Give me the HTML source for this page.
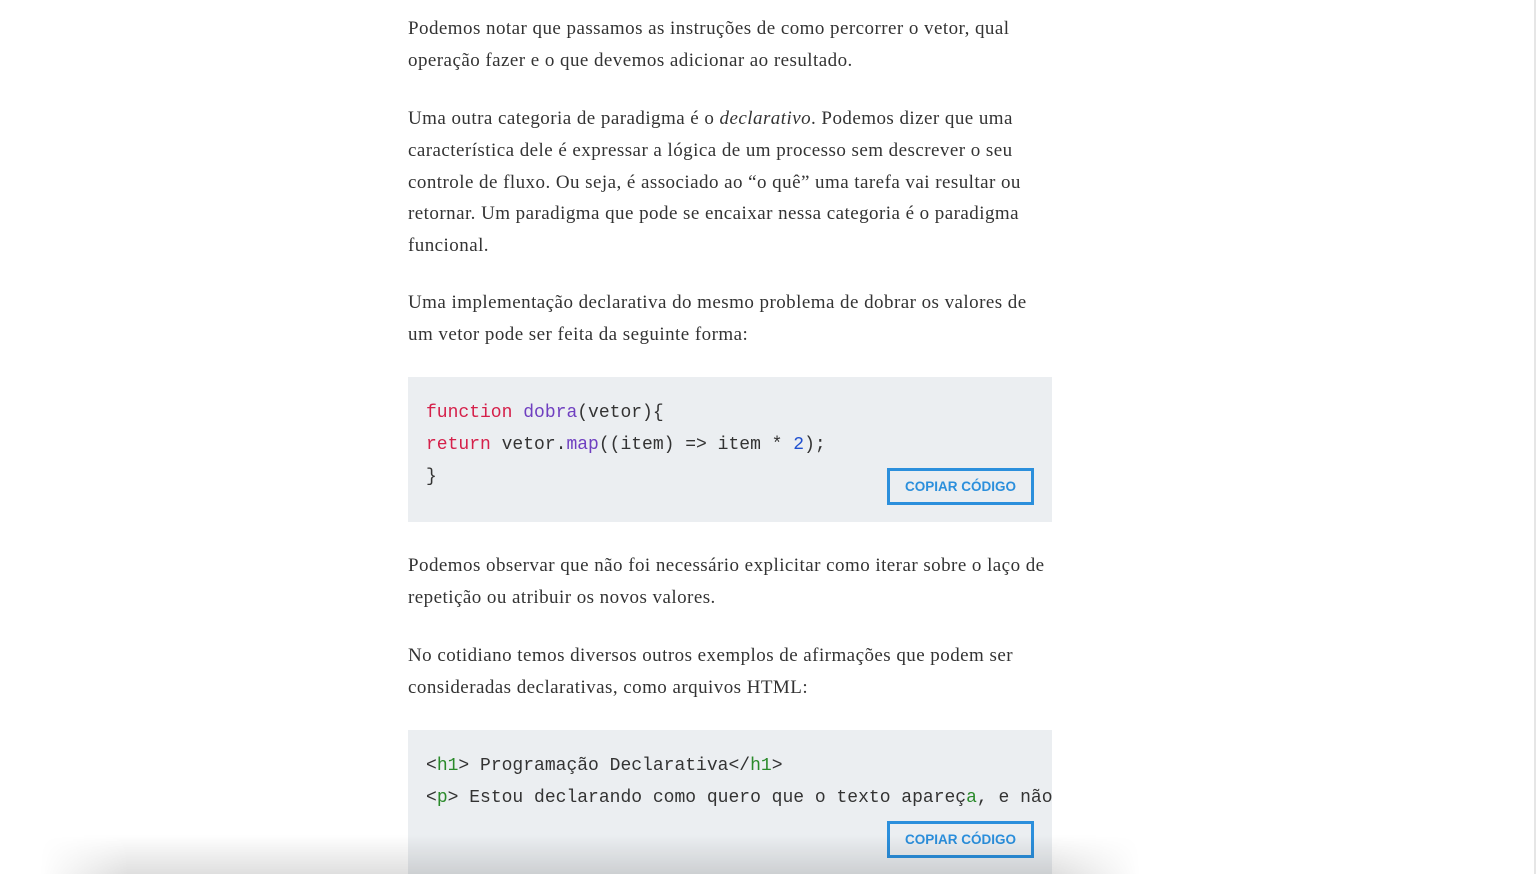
<!DOCTYPE html>
<html><head><meta charset="utf-8"><style>
html,body{margin:0;padding:0;background:#fff;width:1537px;height:874px;overflow:hidden;position:relative}
.t{position:absolute;left:408px;font-family:"Liberation Serif",serif;font-size:19px;letter-spacing:0.45px;color:#333;white-space:nowrap;line-height:31.8px}
.code{position:absolute;left:408px;width:644px;background:#ebeef1;overflow:hidden}
.cl{position:absolute;left:18px;font-family:"Liberation Mono",monospace;font-size:18px;color:#333;white-space:nowrap;line-height:32px}
.btn{position:absolute;left:479px;width:141px;height:31px;border:3px solid #2b8fdc;font-family:"Liberation Sans",sans-serif;font-weight:bold;font-size:13.5px;color:#2b8fdc;text-align:center;line-height:31px}
.k{color:#d5204a}.f{color:#6f3fc0}.n{color:#1f4fcf}.g{color:#2a8a2a}
.edge{position:absolute;left:1534px;top:0;width:2px;height:874px;background:#e6e6e6}
.sh{position:absolute;left:40px;width:1100px;top:835px;height:40px;background:linear-gradient(to bottom,rgba(0,0,0,0),rgba(0,0,0,0.13));-webkit-mask-image:linear-gradient(to right,transparent,#000 8%,#000 92%,transparent);mask-image:linear-gradient(to right,transparent,#000 8%,#000 92%,transparent)}
</style></head><body>
<div class="t" style="top:13px">Podemos notar que passamos as instruções de como percorrer o vetor, qual<br>operação fazer e o que devemos adicionar ao resultado.</div>
<div class="t" style="top:103px">Uma outra categoria de paradigma é o <i>declarativo</i>. Podemos dizer que uma<br>característica dele é expressar a lógica de um processo sem descrever o seu<br>controle de fluxo. Ou seja, é associado ao “o quê” uma tarefa vai resultar ou<br>retornar. Um paradigma que pode se encaixar nessa categoria é o paradigma<br>funcional.</div>
<div class="t" style="top:287px">Uma implementação declarativa do mesmo problema de dobrar os valores de<br>um vetor pode ser feita da seguinte forma:</div>
<div class="code" style="top:377px;height:145px">
<div class="cl" style="top:20px"><span class="k">function</span> <span class="f">dobra</span>(vetor){<br><span class="k">return</span> vetor.<span class="f">map</span>((item) =&gt; item * <span class="n">2</span>);<br>}</div>
<div class="btn" style="top:91px">COPIAR CÓDIGO</div>
</div>
<div class="t" style="top:550px">Podemos observar que não foi necessário explicitar como iterar sobre o laço de<br>repetição ou atribuir os novos valores.</div>
<div class="t" style="top:640px">No cotidiano temos diversos outros exemplos de afirmações que podem ser<br>consideradas declarativas, como arquivos HTML:</div>
<div class="code" style="top:730px;height:144px">
<div class="cl" style="top:20px">&lt;<span class="g">h1</span>&gt; Programação Declarativa&lt;/<span class="g">h1</span>&gt;<br>&lt;<span class="g">p</span>&gt; Estou declarando como quero que o texto apareç<span class="g">a</span>, e não</div>
<div class="btn" style="top:91px">COPIAR CÓDIGO</div>
</div>
<div class="sh"></div>
<div class="edge"></div>
</body></html>
